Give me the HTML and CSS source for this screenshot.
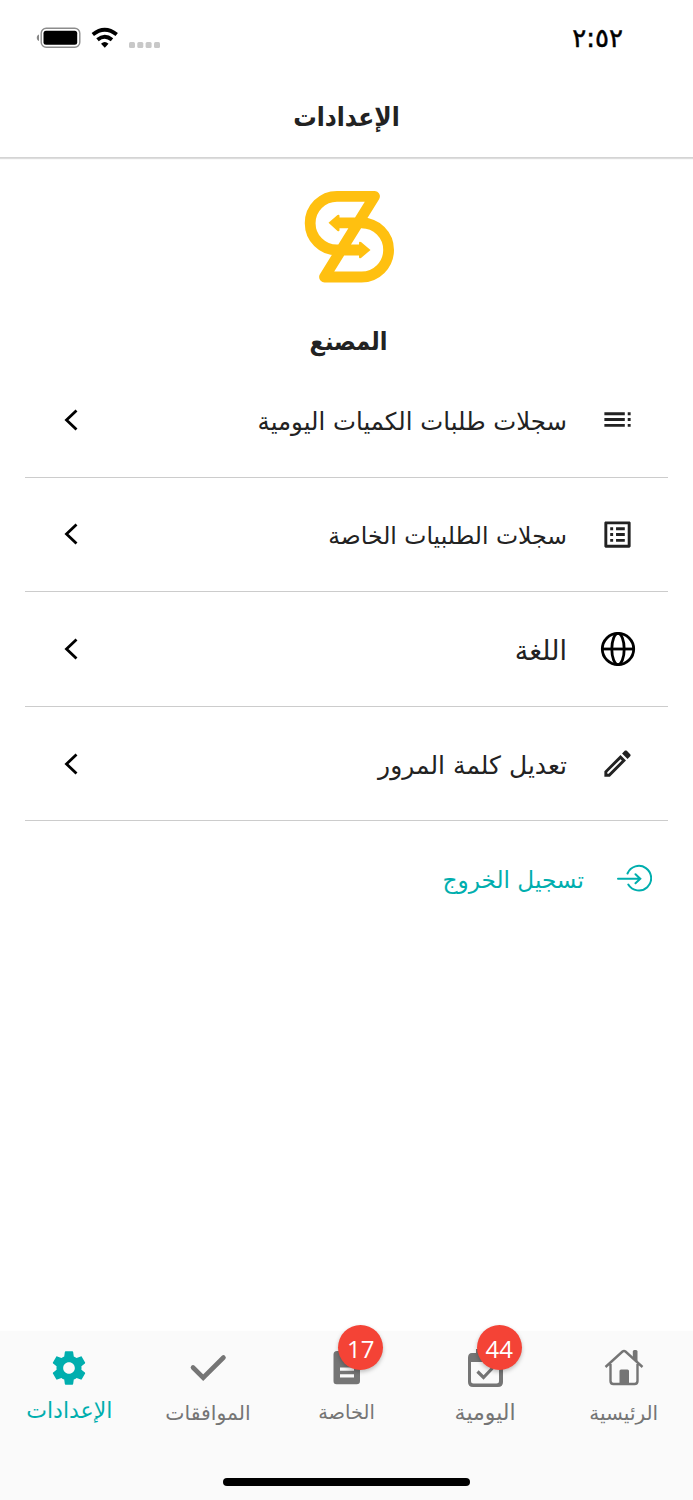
FILE: index.html
```
<!DOCTYPE html>
<html lang="ar" dir="rtl">
<head>
<meta charset="UTF-8">
<meta name="viewport" content="width=device-width, initial-scale=1.0">
<title>الإعدادات</title>
<link rel="stylesheet" href="styles.css">
</head>
<body>
<div class="screen">
    <div class="status-bar">
        <span class="time">٢:٥٢</span>
        <div class="status-icons">
            <svg width="124" height="24" viewBox="36 26 124 24">
                <path d="M39 34.5c-3 1-3 5.500 0 6.500z" fill="#888"/>
                <rect x="41.200" y="28.200" width="38.600" height="19" rx="5" fill="none" stroke="#8c8c8c" stroke-width="1.400"/>
                <rect x="43.500" y="30.800" width="33.700" height="14" rx="2.500"/>
                <g fill="none" stroke="#000" stroke-width="3.800">
                    <path d="M92.800 34.500Q104.700 25 116.700 34.500"/>
                    <path d="M97.500 39.700Q104.700 33.700 112 39.700"/>
                </g>
                <path d="M101 43.800q3.700-3.800 7.500 0l-3.700 4z"/>
                <g fill="#c8c8c8">
                    <rect x="129" y="42" width="6" height="6" rx="1.500"/>
                    <rect x="137.300" y="42" width="6" height="6" rx="1.500"/>
                    <rect x="145.600" y="42" width="6" height="6" rx="1.500"/>
                    <rect x="154" y="42" width="6" height="6" rx="1.500"/>
                </g>
            </svg>
        </div>
    </div>
    <header class="header"><h1>الإعدادات</h1></header>

    <main class="content">
        <svg class="logo" width="92" height="94" viewBox="304 190 92 94">
            <g fill="none" stroke="#ffc010" stroke-width="10.800" stroke-linejoin="round">
                <path d="M337 222.800H361.500A27.100 27.100 0 0 1 361.500 277H324.500L374.500 196.300H337A26.850 26.850 0 0 0 337 250H362"/>
            </g>
            <path d="M328.500 222.800L337.500 215q2-1 2 1v14q0 2-2 1zM370.500 250L361 242q-2-1-2 1v14q0 2 2 1z" fill="#ffc010"/>
        </svg>
        <h2 class="name">المصنع</h2>

        <div class="menu">
            <a class="row">
                <svg class="icon" viewBox="0 0 24 24"><path d="M3 9h14V7H3v2zm0 4h14v-2H3v2zm0 4h14v-2H3v2zm16 0h2v-2h-2v2zm0-10v2h2V7h-2zm0 6h2v-2h-2v2z"/></svg>
                <span class="label daily-log">سجلات طلبات الكميات اليومية</span>
                <svg class="arrow" viewBox="0 0 14 22"><path d="M12.500 1.500L2.500 11l10 9.500"/></svg>
            </a>
            <a class="row">
                <svg class="icon" viewBox="0 0 24 24"><path d="M11 7h6v2h-6zm0 4h6v2h-6zm0 4h6v2h-6zM7 7h2v2H7zm0 4h2v2H7zm0 4h2v2H7zM20.100 3H3.900c-.5 0-.9.400-.9.900v16.200c0 .4.400.9.900.9h16.200c.4 0 .9-.5.900-.9V3.900c0-.5-.5-.9-.9-.9zM19 19H5V5h14z"/></svg>
                <span class="label special-log">سجلات الطلبيات الخاصة</span>
                <svg class="arrow" viewBox="0 0 14 22"><path d="M12.500 1.500L2.500 11l10 9.500"/></svg>
            </a>
            <a class="row">
                <svg class="icon globe" viewBox="0 0 36 36"><circle cx="18" cy="18" r="15.700"/><ellipse cx="18" cy="18" rx="6.200" ry="15.700"/><path d="M2 18h32"/></svg>
                <span class="label language">اللغة</span>
                <svg class="arrow" viewBox="0 0 14 22"><path d="M12.500 1.500L2.500 11l10 9.500"/></svg>
            </a>
            <a class="row">
                <svg class="icon" viewBox="0 0 24 24"><path d="M14.060 9.020l.92.920L5.920 19H5v-.92l9.060-9.060M17.660 3c-.25 0-.51.100-.7.290l-1.830 1.830 3.750 3.750 1.830-1.830c.39-.39.390-1.020 0-1.410l-2.340-2.340c-.2-.2-.45-.29-.71-.29zm-3.600 3.190L3 17.250V21h3.750L17.810 9.940l-3.750-3.750z"/></svg>
                <span class="label">تعديل كلمة المرور</span>
                <svg class="arrow" viewBox="0 0 14 22"><path d="M12.500 1.500L2.500 11l10 9.500"/></svg>
            </a>
        </div>

        <a class="logout">
            <svg width="36" height="30" viewBox="616 864 36 30"><path d="M627.500 874.500A12.300 12.300 0 1 1 628.300 885.500M618 879.700H640M635.500 875.200l4.800 4.500-4.800 4.500"/></svg>
            <span class="label">تسجيل الخروج</span>
        </a>
    </main>

    <nav class="tabs">
        <a class="tab">
            <svg width="40" height="40" viewBox="0 0 40 40">
                <path d="M1.500 19L18.500 3.500q1.500-1 3 0L38.500 19M6.500 16v17q0 3 3 3h21q3 0 3-3V16" fill="none" stroke="#757575" stroke-width="2.400"/>
                <path d="M28.800 10V3.500q0-1.500 1.500-1.500h1.700q1.500 0 1.500 1.500V14z"/>
                <path d="M15.500 36V23q0-1.500 1.500-1.500h6.500q1.500 0 1.500 1.500v13z"/>
            </svg>
            <span class="tab-label">الرئيسية</span>
        </a>
        <a class="tab">
            <svg width="40" height="40" viewBox="0 0 40 40">
                <path d="M7 5h4V1h4v4h11V1h4v4h2q6 0 6 5v24q0 5-5 5H8q-5 0-5-5V10q0-5 4-5zM6 14v19q0 2.500 2.500 2.500h23q2.500 0 2.500-2.500V14z" fill-rule="evenodd"/>
                <path d="M12.500 23.500l6 6L29 18.500" fill="none" stroke="#757575" stroke-width="3.200"/>
            </svg>
            <span class="badge">44</span>
            <span class="tab-label daily">اليومية</span>
        </a>
        <a class="tab">
            <svg width="40" height="40" viewBox="0 0 40 40">
                <path d="M10 3h15l8 8v22q0 3.300-3.300 3.300H9.500q-3 0-3-3.300V6.500Q6.500 3 10 3zM13 19.500v3.300h14v-3.300zm0 6.800v3.300h14v-3.300z" fill-rule="evenodd"/>
            </svg>
            <span class="badge">17</span>
            <span class="tab-label special">الخاصة</span>
        </a>
        <a class="tab">
            <svg width="40" height="40" viewBox="0 0 40 40"><path d="M5 19.500L15.200 29.700L35.500 9.500" fill="none" stroke="#757575" stroke-width="4.600" stroke-linecap="round"/></svg>
            <span class="tab-label approvals">الموافقات</span>
        </a>
        <a class="tab active">
            <svg width="40" height="40" viewBox="0 0 24 24"><path d="M19.430 12.980c.04-.32.070-.64.070-.98s-.03-.66-.07-.98l2.110-1.650c.19-.15.240-.42.120-.64l-2-3.460c-.12-.22-.39-.3-.61-.22l-2.490 1c-.52-.4-1.080-.73-1.690-.98l-.38-2.650C14.460 2.180 14.250 2 14 2h-4c-.25 0-.46.180-.49.420l-.38 2.650c-.61.250-1.170.59-1.690.98l-2.490-1c-.23-.09-.49 0-.61.220l-2 3.460c-.13.220-.07.490.12.640l2.110 1.650c-.04.320-.07.650-.07.980s.03.660.070.980l-2.110 1.650c-.19.150-.24.420-.12.640l2 3.460c.12.220.39.300.61.220l2.490-1c.52.400 1.080.73 1.690.98l.38 2.650c.03.240.24.420.49.420h4c.25 0 .46-.18.490-.42l.38-2.650c.61-.25 1.170-.59 1.690-.98l2.490 1c.23.090.49 0 .61-.22l2-3.460c.12-.22.070-.49-.12-.64l-2.110-1.650zM12 15.500c-1.930 0-3.500-1.570-3.500-3.500s1.570-3.500 3.500-3.500 3.500 1.570 3.500 3.500-1.570 3.500-3.500 3.500z"/></svg>
            <span class="tab-label">الإعدادات</span>
        </a>
        <div class="home-indicator"></div>
    </nav>
</div>
</body>
</html>
```
FILE: styles.css
```
* {
    box-sizing: border-box;
}
body {
    margin: 0;
    background-color: #fff;
    color: #222;
    font-family: "DejaVu Sans", sans-serif;
}
.screen {
    display: flex;
    flex-direction: column;
    height: 1500px;
    overflow: hidden;
}
.status-bar {
    display: flex;
    justify-content: space-between;
    align-items: center;
    height: 76px;
    padding: 0 70px 0 36px;
}
.time {
    font-size: 26px;
    color: #000;
    -webkit-text-stroke: 0.500px #000;
}
.status-icons svg {
    display: block;
}
.header {
    display: flex;
    align-items: center;
    justify-content: center;
    height: 82px;
    border-bottom: 1px solid #d4d4d4;
    box-shadow: 0 1px 1px #ddd;
}
.header h1 {
    margin: 0;
    font-family: "DejaVu Sans Condensed", "DejaVu Sans", sans-serif;
    font-size: 26px;
}
.content {
    flex: 1;
    display: flex;
    flex-direction: column;
    align-items: center;
    padding: 32px 25px 0;
}
.logo {
    margin-left: 6px;
}
.name {
    height: 36px;
    line-height: 36px;
    margin: 40px 0 3px 4px;
    font-family: "DejaVu Sans Condensed", "DejaVu Sans", sans-serif;
    font-size: 25px;
}
.menu {
    width: 643px;
}
.row {
    display: flex;
    align-items: center;
    height: 114.600px;
    padding: 0 33px 0 39px;
    border-bottom: 1px solid #ccc;
}
.icon {
    width: 35px;
    height: 35px;
    fill: #222;
}
.globe {
    width: 36px;
    height: 36px;
    margin: 0 -0.500px;
    fill: none;
    stroke: #000;
    stroke-width: 2.800;
}
.row .label {
    flex: 1;
    padding-top: 4px;
    margin-right: 33px;
    font-size: 25px;
}
.row .daily-log {
    font-size: 24.400px;
}
.row .special-log {
    font-size: 23.500px;
}
.row .language {
    font-size: 27px;
}
.arrow {
    width: 14px;
    height: 22px;
    fill: none;
    stroke: #000;
    stroke-width: 2.800;
}
.logout {
    display: flex;
    align-items: center;
    align-self: stretch;
    height: 114px;
    padding-right: 16px;
    color: #00aeae;
}
.logout svg {
    fill: none;
    stroke: #00aeae;
    stroke-width: 2;
    stroke-linecap: round;
}
.logout .label {
    padding-top: 3px;
    margin-right: 32px;
    font-size: 23.200px;
}
.tabs {
    position: relative;
    display: flex;
    height: 168px;
    background-color: #fafafa;
    box-shadow: 0 -1px 1px #fafafa;
}
.tab {
    position: relative;
    flex: 1;
    display: flex;
    flex-direction: column;
    align-items: center;
    padding-top: 16px;
    color: #757575;
    fill: #757575;
}
.tab-label {
    line-height: 30px;
    margin-top: 10px;
    font-size: 20px;
    white-space: nowrap;
}
.daily {
    font-size: 22px;
}
.special {
    font-size: 19.400px;
}
.approvals {
    font-size: 20.400px;
}
.active {
    color: #00aeae;
    fill: #00aeae;
}
.active .tab-label {
    margin-top: 8px;
    font-size: 22px;
}
.badge {
    position: absolute;
    top: -7px;
    left: 61px;
    width: 45px;
    height: 45px;
    border-radius: 50%;
    background-color: #f44336;
    color: #fff;
    font-family: "Open Sans", sans-serif;
    font-size: 24px;
    line-height: 48px;
    text-align: center;
    box-shadow: 0 2px 4px rgba(0, 0, 0, 0.25);
}
.home-indicator {
    position: absolute;
    bottom: 14px;
    left: 223px;
    width: 247px;
    height: 8px;
    border-radius: 4px;
    background-color: #000;
}
```
